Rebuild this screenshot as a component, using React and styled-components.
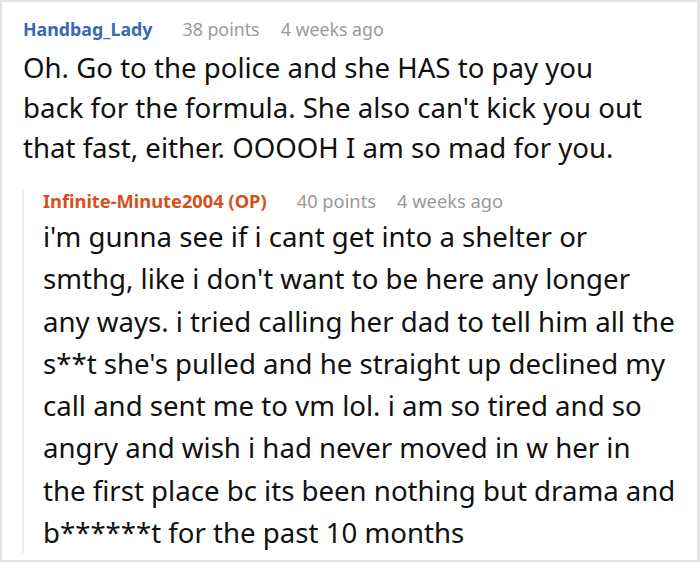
import React from 'react'
import styled, { createGlobalStyle } from 'styled-components'

const GlobalStyle = createGlobalStyle`
  html, body {
    margin: 0;
    padding: 0;
    background: #fff;
  }
  body {
    font-family: 'Noto Sans', 'Open Sans', sans-serif;
  }
`

const Card = styled.div`
  box-sizing: border-box;
  width: 700px;
  height: 562px;
  border: 2px solid #e4e4e4;
  border-right-width: 3px;
  padding: 15px 20px 0 21px;
  background: #fff;
  overflow: hidden;
`

const Comment = styled.div`
  display: flex;
  flex-direction: column;
`

const Reply = styled.div`
  display: flex;
  flex-direction: column;
  margin: 22px 0 0 -1px;
  padding-left: 19px;
  border-left: 2px solid #ececec;
`

const Meta = styled.div`
  display: flex;
  align-items: baseline;
  font-size: ${(p) => p.size}px;
  line-height: 24px;
  color: #999;
  white-space: nowrap;
`

const Author = styled.span`
  font-weight: 700;
  color: ${(p) => (p.op ? '#d5501b' : '#3a68b8')};
  margin-right: 30px;
`

const Points = styled.span`
  margin-right: 21px;
`

const Body = styled.p`
  margin: ${(p) => p.gap}px -20px 0 0;
  font-size: 27.6px;
  line-height: ${(p) => p.lh}px;
  color: #111;
  white-space: nowrap;
`

const App = () => {
  return (
    <>
      <GlobalStyle />
      <Card>
        <Comment>
          <Meta size={17.8}>
            <Author>Handbag_Lady</Author>
            <Points>38 points</Points>
            <span>4 weeks ago</span>
          </Meta>
          <Body gap={6} lh={40}>
            Oh. Go to the police and she HAS to pay you
            <br />
            back for the formula. She also can't kick you out
            <br />
            that fast, either. OOOOH I am so mad for you.
          </Body>
        </Comment>
        <Reply>
          <Meta size={18.3}>
            <Author op>Infinite-Minute2004 (OP)</Author>
            <Points>40 points</Points>
            <span>4 weeks ago</span>
          </Meta>
          <Body gap={2} lh={42.3}>
            i'm gunna see if i cant get into a shelter or
            <br />
            smthg, like i don't want to be here any longer
            <br />
            any ways. i tried calling her dad to tell him all the
            <br />
            s**t she's pulled and he straight up declined my
            <br />
            call and sent me to vm lol. i am so tired and so
            <br />
            angry and wish i had never moved in w her in
            <br />
            the first place bc its been nothing but drama and
            <br />
            b******t for the past 10 months
          </Body>
        </Reply>
      </Card>
    </>
  )
}

export default App
